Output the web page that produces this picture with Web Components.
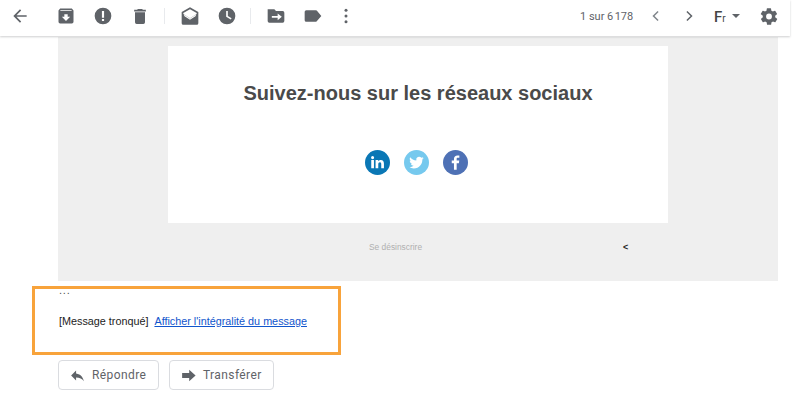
<!doctype html>
<html><head><meta charset="utf-8"><style>
html,body{margin:0;padding:0;background:#fff;width:800px;height:409px;overflow:hidden;font-family:"Liberation Sans",Arial,sans-serif}
</style></head><body>
<mail-toolbar></mail-toolbar>
<mail-panel></mail-panel>
<trunc-box></trunc-box>
<reply-row></reply-row>
<script>
function def(name,html){customElements.define(name,class extends HTMLElement{constructor(){super();this.attachShadow({mode:'open'}).innerHTML=html}})}
const I=(d,s=20,x='')=>`<svg width="${s}" height="${s}" viewBox="0 0 24 24" fill="#5f6368" ${x}>${d}</svg>`;
def('mail-toolbar',`<style>
:host{display:flex;align-items:center;height:36px;width:790px;box-sizing:border-box;padding-bottom:4px;background:#fff;box-shadow:0 1px 2px rgba(60,64,67,.25);position:relative;z-index:1;color:#5f6368}
.i{display:flex;width:20px;height:20px;flex:none;align-items:center;justify-content:center}
.sep{width:1px;height:16px;background:#e8eaed;flex:none}
.count{font:11px Roboto,sans-serif;color:#5f6368;white-space:nowrap}
.lang{font:500 15px Roboto,sans-serif;color:#444;white-space:nowrap;width:14px;margin-top:2px}
.lang small{font-size:10px;font-weight:400}
.car{width:0;height:0;border:4px solid transparent;border-top-color:#5f6368;border-bottom:0;flex:none}
</style>
<span class="i" style="margin-left:10px">${I('<path d="M20 11H7.800l5.600-5.600L12 4l-8 8 8 8 1.400-1.400L7.800 13H20z"/>')}</span>
<span class="i" style="margin-left:26px">${I('<path d="M5 3h14l2 2.500V19a2 2 0 0 1-2 2H5a2 2 0 0 1-2-2V5.500zM5.500 5l-.5 1h14l-.5-1zM12 18l5-5h-3v-3h-4v3H7z" fill-rule="evenodd"/>')}</span>
<span class="i" style="margin-left:17px">${I('<path fill-rule="evenodd" d="M12 2a10 10 0 1 1 0 20 10 10 0 0 1 0-20zm-1.300 4v8h2.600V6zm0 9.500v2.600h2.600v-2.600z"/>')}</span>
<span class="i" style="margin-left:17px">${I('<path d="M6 19a2 2 0 0 0 2 2h8a2 2 0 0 0 2-2V7H6zM19 4h-3.500l-1-1h-5l-1 1H5v2h14z"/>',21)}</span>
<span class="sep" style="margin-left:14px"></span>
<span class="i" style="margin-left:15px">${I('<path fill-rule="evenodd" d="M12 1l10 5.500V20a2 2 0 0 1-2 2H4a2 2 0 0 1-2-2V6.500zM12 3.300L4 7.700V9l8 5 8-5V7.700zM5 11.500l7 4.500 7-4.500V10l-7 4.300L5 10z"/>',21)}</span>
<span class="i" style="margin-left:17px">${I('<path fill-rule="evenodd" d="M12 2a10 10 0 1 1 0 20 10 10 0 0 1 0-20zm-1 4v7l5.500 3.300 1-1.700-4.500-2.600V6z"/>')}</span>
<span class="sep" style="margin-left:13px"></span>
<span class="i" style="margin-left:15px">${I('<path fill-rule="evenodd" d="M2 4h8l2 2h8a2 2 0 0 1 2 2v10a2 2 0 0 1-2 2H4a2 2 0 0 1-2-2zm12 5v3H7v2h7v3l5-4z"/>')}</span>
<span class="i" style="margin-left:17px">${I('<path d="M16.500 5.500A2 2 0 0 0 15 5H4a2 2 0 0 0-2 2v10a2 2 0 0 0 2 2h11c.6 0 1.100-.3 1.500-.7L22 12z"/>')}</span>
<span class="i" style="margin-left:13px">${I('<circle cx="12" cy="5" r="1.800"/><circle cx="12" cy="12" r="1.800"/><circle cx="12" cy="19" r="1.800"/>')}</span>
<span class="count" style="margin-left:224px;width:52px">1 sur 6&#8239;178</span>
<span class="i" style="margin-left:14px">${I('<path d="M14.500 6.500L9 12l5.500 5.500" fill="none" stroke="#80868b" stroke-width="1.800"/>')}</span>
<span class="i" style="margin-left:13px">${I('<path d="M9.500 6.500L15 12l-5.500 5.500" fill="none" stroke="#5f6368" stroke-width="1.800"/>')}</span>
<span class="lang" style="margin-left:15px">F<small>r</small></span>
<span class="car" style="margin-left:4px"></span>
<span class="i" style="margin-left:19px">${I('<path fill-rule="evenodd" d="M19.400 13a7.500 7.500 0 0 0 0-2l2.100-1.600a.5.500 0 0 0 .1-.6l-2-3.500a.5.500 0 0 0-.6-.2l-2.500 1a7.300 7.300 0 0 0-1.700-1l-.4-2.700a.5.500 0 0 0-.5-.4h-4a.5.500 0 0 0-.5.400l-.4 2.700a7.300 7.300 0 0 0-1.700 1l-2.500-1a.5.500 0 0 0-.6.200l-2 3.500a.5.500 0 0 0 .1.600L4.600 11a7.500 7.500 0 0 0 0 2l-2.100 1.600a.5.500 0 0 0-.1.600l2 3.500c.1.200.4.300.6.200l2.500-1c.5.400 1.100.7 1.700 1l.4 2.700c0 .2.200.4.500.4h4c.2 0 .5-.2.500-.4l.4-2.700a7.300 7.300 0 0 0 1.700-1l2.500 1c.2.100.5 0 .6-.2l2-3.500a.5.500 0 0 0-.1-.6zM12 15.500a3.500 3.500 0 1 1 0-7 3.500 3.500 0 0 1 0 7z"/>',21)}</span>`);
def('social-icons',`<style>
:host{display:flex;gap:14px;justify-content:center;padding-right:3px}
svg{display:block}
</style>
<svg width="25" height="25" viewBox="0 0 26 26"><circle cx="13" cy="13" r="13" fill="#0a77b5"/><path fill="#fff" d="M6.500 10.500h2.800V19H6.500zM7.900 6.300a1.600 1.600 0 1 1 0 3.200 1.600 1.600 0 0 1 0-3.200zM11 10.500h2.700v1.200c.5-.8 1.400-1.400 2.700-1.400 2.400 0 3.300 1.500 3.300 4V19h-2.800v-4.200c0-1.200-.3-2.100-1.400-2.100s-1.700.9-1.700 2.100V19H11z"/></svg>
<svg width="25" height="25" viewBox="0 0 26 26"><circle cx="13" cy="13" r="13" fill="#76c9ee"/><path fill="#fff" d="M20.500 8.400c-.6.300-1.200.4-1.800.5.600-.4 1.100-1 1.400-1.700-.6.400-1.300.6-2 .8a3.100 3.100 0 0 0-5.300 2.800c-2.600-.1-4.900-1.400-6.400-3.300-.8 1.400-.4 3.200 1 4.100-.5 0-1-.2-1.400-.4 0 1.500 1.100 2.800 2.500 3.100-.5.100-.9.100-1.400.1.400 1.200 1.500 2.100 2.900 2.100a6.300 6.300 0 0 1-4.600 1.300c1.400.9 3 1.400 4.800 1.400 5.800 0 9.100-4.900 8.900-9.300.6-.5 1-1 1.400-1.500z"/></svg>
<svg width="25" height="25" viewBox="0 0 26 26"><circle cx="13" cy="13" r="13" fill="#4e71b5"/><path fill="#fff" d="M14.200 20.500v-6.800h2.300l.4-2.700h-2.700V9.400c0-.8.200-1.300 1.300-1.300H17V5.700c-.3 0-1.100-.1-2-.1-2.100 0-3.600 1.300-3.600 3.600v1.800H9.100v2.700h2.300v6.800z"/></svg>`);
def('mail-panel',`<style>
:host{display:block;box-sizing:border-box;margin:1px 0 0 58px;width:720px;height:244px;background:#efefef;padding-top:9px}
.card{margin-left:110px;width:500px;height:177px;background:#fff;box-sizing:border-box;padding-top:33px;text-align:center}
h1{margin:0;font:700 20px/28px "Liberation Sans",sans-serif;color:#4a4a4a}
social-icons{margin-top:43px}
.foot{display:flex;margin-top:18px;height:12px;align-items:center;font-size:8.400px;color:#b0b0b0;padding-left:311px}
.lt{margin-left:201px;font-size:9px;font-weight:700;color:#222}
</style>
<div class="card"><h1>Suivez-nous sur les réseaux sociaux</h1><social-icons></social-icons></div>
<div class="foot"><span>Se désinscrire</span><span class="lt">&lt;</span></div>`);
def('trunc-box',`<style>
:host{display:block;box-sizing:border-box;margin:5px 0 0 32px;width:309px;height:69px;border:3px solid #f8a33b;padding:0 0 0 24px;font-size:10.800px;color:#222;position:relative}
.dots{font-size:11px;line-height:2px;height:15px;color:#555;letter-spacing:.8px}
.msg{display:flex;gap:6px;margin-top:9px;line-height:16px;white-space:nowrap}
a{color:#1155cc}
</style>
<div class="dots">...</div>
<div class="msg"><span>[Message tronqué]</span><a href="#">Afficher l'intégralité du message</a></div>`);
def('reply-btn',`<style>
:host{display:inline-flex;align-items:center;box-sizing:border-box;height:30px;border:1px solid #dadce0;border-radius:4px;padding-left:10px;color:#5f6368;font:400 12px "Roboto",sans-serif;letter-spacing:.4px;background:#fff}
::slotted(svg){margin-right:6px}
</style><slot></slot>`);
def('reply-row',`<style>:host{display:flex;gap:10px;margin:5px 0 0 58px}</style>
<reply-btn style="width:101px">${I('<path d="M10 9V5l-7 7 7 7v-4.100c5 0 8.500 1.600 11 5.100-1-5-4-10-11-11z"/>',17)}Répondre</reply-btn>
<reply-btn style="width:105px">${I('<path d="M13 4l9 8-9 8v-4.500H3v-7h10z"/>',17)}Transférer</reply-btn>`);
</script>
</body></html>
